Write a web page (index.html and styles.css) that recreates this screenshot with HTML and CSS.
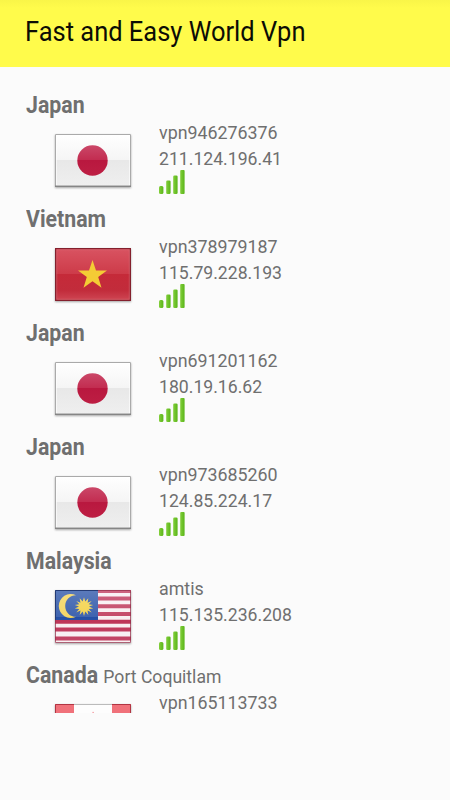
FILE: index.html
```
<!DOCTYPE html>
<html lang="en">
<head>
    <meta charset="UTF-8">
    <meta name="viewport" content="width=device-width, initial-scale=1.0">
    <title>Fast and Easy World Vpn</title>
    <link rel="stylesheet" href="styles.css">
</head>
<body>
    <!-- Shared flags and signal icon -->
    <svg class="defs" width="0" height="0" aria-hidden="true">
        <defs>
            <linearGradient id="white" x1="0" y1="0" x2="0" y2="1">
                <stop offset="0" stop-color="#ffffff"/>
                <stop offset="0.49" stop-color="#f5f5f5"/>
                <stop offset="0.5" stop-color="#e8e8e8"/>
                <stop offset="1" stop-color="#efefef"/>
            </linearGradient>
            <linearGradient id="disc" x1="0" y1="0" x2="0" y2="1">
                <stop offset="0" stop-color="#cb4768"/>
                <stop offset="0.49" stop-color="#c22c50"/>
                <stop offset="0.5" stop-color="#b9183f"/>
                <stop offset="1" stop-color="#bd1e43"/>
            </linearGradient>
            <linearGradient id="red" x1="0" y1="0" x2="0" y2="1">
                <stop offset="0" stop-color="#d95462"/>
                <stop offset="0.49" stop-color="#cd3b49"/>
                <stop offset="0.5" stop-color="#c52a39"/>
                <stop offset="0.8" stop-color="#c22c3b"/>
                <stop offset="1" stop-color="#cf4855"/>
            </linearGradient>
            <linearGradient id="shine" x1="0" y1="0" x2="0" y2="1">
                <stop offset="0" stop-color="#fff" stop-opacity="0.25"/>
                <stop offset="0.5" stop-color="#fff" stop-opacity="0.12"/>
                <stop offset="0.51" stop-color="#fff" stop-opacity="0"/>
                <stop offset="1" stop-color="#fff" stop-opacity="0.1"/>
            </linearGradient>
            <linearGradient id="green" x1="0" y1="0" x2="1" y2="0">
                <stop offset="0" stop-color="#83cf3b"/>
                <stop offset="1" stop-color="#58b418"/>
            </linearGradient>
        </defs>
        <symbol id="japan" viewBox="0 0 76 53">
            <rect width="76" height="53" fill="url(#white)"/>
            <circle cx="37.5" cy="26.5" r="15.2" fill="url(#disc)"/>
            <rect x="1.5" y="1.5" width="73" height="50" fill="none" stroke="#fff" stroke-opacity="0.6"/>
            <path d="M.5 53V.5h75V53" fill="none" stroke="#aaa"/>
            <path d="M0 52.3h76" stroke="#858585" stroke-width="1.4"/>
        </symbol>
        <symbol id="vietnam" viewBox="0 0 76 53">
            <rect width="76" height="53" fill="url(#red)"/>
            <path d="M37.5 12l3.5 10.4h11l-8.8 6.7 3.3 10.7-9-6.5-9 6.5 3.3-10.7-8.8-6.7h11z" fill="#f4cc35"/>
            <rect x="1.7" y="1.7" width="72.6" height="49.6" fill="none" stroke="#e57d86" stroke-opacity="0.5"/>
            <rect x=".6" y=".6" width="74.8" height="51.8" fill="none" stroke="#84202d" stroke-width="1.2"/>
        </symbol>
        <symbol id="malaysia" viewBox="0 0 76 53">
            <rect width="76" height="53" fill="#f8eef1"/>
            <path d="M0 1h76M0 8.5h76M0 16.2h76M0 24h76M0 31.8h76M0 39.5h76M0 48.5h76" stroke="#bd3356" stroke-width="4"/>
            <rect width="43" height="30" fill="#254fa5"/>
            <path d="M21 5.2a12 12 0 1 0 0 21.6 10.3 10.3 0 1 1 0-21.6z" fill="#f3d254"/>
            <path d="M29 7.2l1.3 4.4 3-3.4-.7 4.5 4.1-1.8-3 3.4 4.5.6-4.2 1.7 4.2 1.9-4.5.4 3 3.5-4.2-1.9.8 4.5-3-3.4-1.3 4.4-1.3-4.4-3 3.4.8-4.5-4.2 1.9 3-3.5-4.5-.4 4.2-1.9-4.2-1.7 4.5-.6-3-3.4 4.1 1.8-.7-4.5 3 3.4z" fill="#f3d03f"/>
            <rect width="76" height="53" fill="url(#shine)"/>
            <path d="M.5 30V.5H43" fill="none" stroke="#243b75"/>
            <path d="M43 .5h32.5v52H.5V30" fill="none" stroke="#93324b" stroke-opacity="0.75"/>
        </symbol>
        <symbol id="canada" viewBox="0 0 76 53">
            <rect width="76" height="53" fill="#fdfdfd"/>
            <path d="M0 0h19v53H0zM57 0h19v53H57z" fill="#f0717a"/>
            <path d="M38 7.5l3 5 4-2-1.5 10 6-5 6 5-8 11-9 3-9-3-8-11 6-5 6 5-1.5-10 4 2z" fill="#f0717a"/>
            <path d="M19 .5h38" stroke="#bbb"/>
            <path d="M19 .5H.5v52H19M57 .5h18.5v52H57" fill="none" stroke="#b23543"/>
        </symbol>
        <symbol id="signal" viewBox="0 0 26 24">
            <rect x="0" y="16" width="4.4" height="8" rx="1.5" fill="url(#green)"/>
            <rect x="7.2" y="10.5" width="4.4" height="13.5" rx="1.3" fill="url(#green)"/>
            <rect x="14.2" y="5.5" width="4.4" height="18.5" rx="1.3" fill="url(#green)"/>
            <rect x="21.2" y="0" width="4.4" height="24" rx="1" fill="url(#green)"/>
        </symbol>
    </svg>

    <header class="toolbar">
        <h1>Fast and Easy World Vpn</h1>
    </header>

    <main class="server-list">
        <div class="server">
            <div class="place"><b>Japan</b></div>
            <div class="details">
                <svg class="flag"><use href="#japan"/></svg>
                <div class="info">
                    <span class="host">vpn946276376</span>
                    <span class="ip">211.124.196.41</span>
                    <svg class="signal"><use href="#signal"/></svg>
                </div>
            </div>
        </div>

        <div class="server">
            <div class="place"><b>Vietnam</b></div>
            <div class="details">
                <svg class="flag"><use href="#vietnam"/></svg>
                <div class="info">
                    <span class="host">vpn378979187</span>
                    <span class="ip">115.79.228.193</span>
                    <svg class="signal"><use href="#signal"/></svg>
                </div>
            </div>
        </div>

        <div class="server">
            <div class="place"><b>Japan</b></div>
            <div class="details">
                <svg class="flag"><use href="#japan"/></svg>
                <div class="info">
                    <span class="host">vpn691201162</span>
                    <span class="ip">180.19.16.62</span>
                    <svg class="signal"><use href="#signal"/></svg>
                </div>
            </div>
        </div>

        <div class="server">
            <div class="place"><b>Japan</b></div>
            <div class="details">
                <svg class="flag"><use href="#japan"/></svg>
                <div class="info">
                    <span class="host">vpn973685260</span>
                    <span class="ip">124.85.224.17</span>
                    <svg class="signal"><use href="#signal"/></svg>
                </div>
            </div>
        </div>

        <div class="server">
            <div class="place"><b>Malaysia</b></div>
            <div class="details">
                <svg class="flag"><use href="#malaysia"/></svg>
                <div class="info">
                    <span class="host">amtis</span>
                    <span class="ip">115.135.236.208</span>
                    <svg class="signal"><use href="#signal"/></svg>
                </div>
            </div>
        </div>

        <div class="server">
            <div class="place"><b>Canada</b> <span class="city">Port Coquitlam</span></div>
            <div class="details">
                <svg class="flag"><use href="#canada"/></svg>
                <div class="info">
                    <span class="host">vpn165113733</span>
                </div>
            </div>
        </div>
    </main>
</body>
</html>
```
FILE: styles.css
```
body {
    margin: 0;
    height: 800px;
    overflow: hidden;
    background-color: #fbfbfb;
    color: #6f6f6f;
    font-family: Roboto, sans-serif;
}
.defs {
    display: block;
}
.toolbar {
    height: 67px;
    padding-left: 25px;
    box-sizing: border-box;
    background: linear-gradient(#f9f548, #fffb4b 8px);
}
/* slightly condensed text */
h1, .place, .host, .ip {
    transform: scaleX(0.938);
    transform-origin: left;
}
h1 {
    margin: 0;
    line-height: 65px;
    font-size: 27px;
    font-weight: 400;
    color: #0c0c05;
    transform: scaleX(0.943);
}
.server-list {
    height: 646px;
    padding: 23px 0 0 26px;
    box-sizing: border-box;
    overflow: hidden;
}
.server {
    height: 114px;
}
.place {
    height: 30px;
    line-height: 32px;
    font-size: 23px;
    white-space: nowrap;
    transform: scaleX(0.926);
}
.place b {
    font-weight: 700;
}
.city {
    font-size: 19px;
}
.details {
    display: flex;
    align-items: flex-start;
}
.flag {
    width: 76px;
    height: 53px;
    margin: 14px 28px 0 28.5px;
    flex-shrink: 0;
    box-shadow: 0 1px 2px rgba(0, 0, 0, 0.35);
}
.info {
    display: flex;
    flex-direction: column;
    font-size: 19px;
    line-height: 25.5px;
}
.ip {
    transform: scaleX(0.928);
}
.signal {
    width: 26px;
    height: 24px;
    margin-top: -1px;
}
```
